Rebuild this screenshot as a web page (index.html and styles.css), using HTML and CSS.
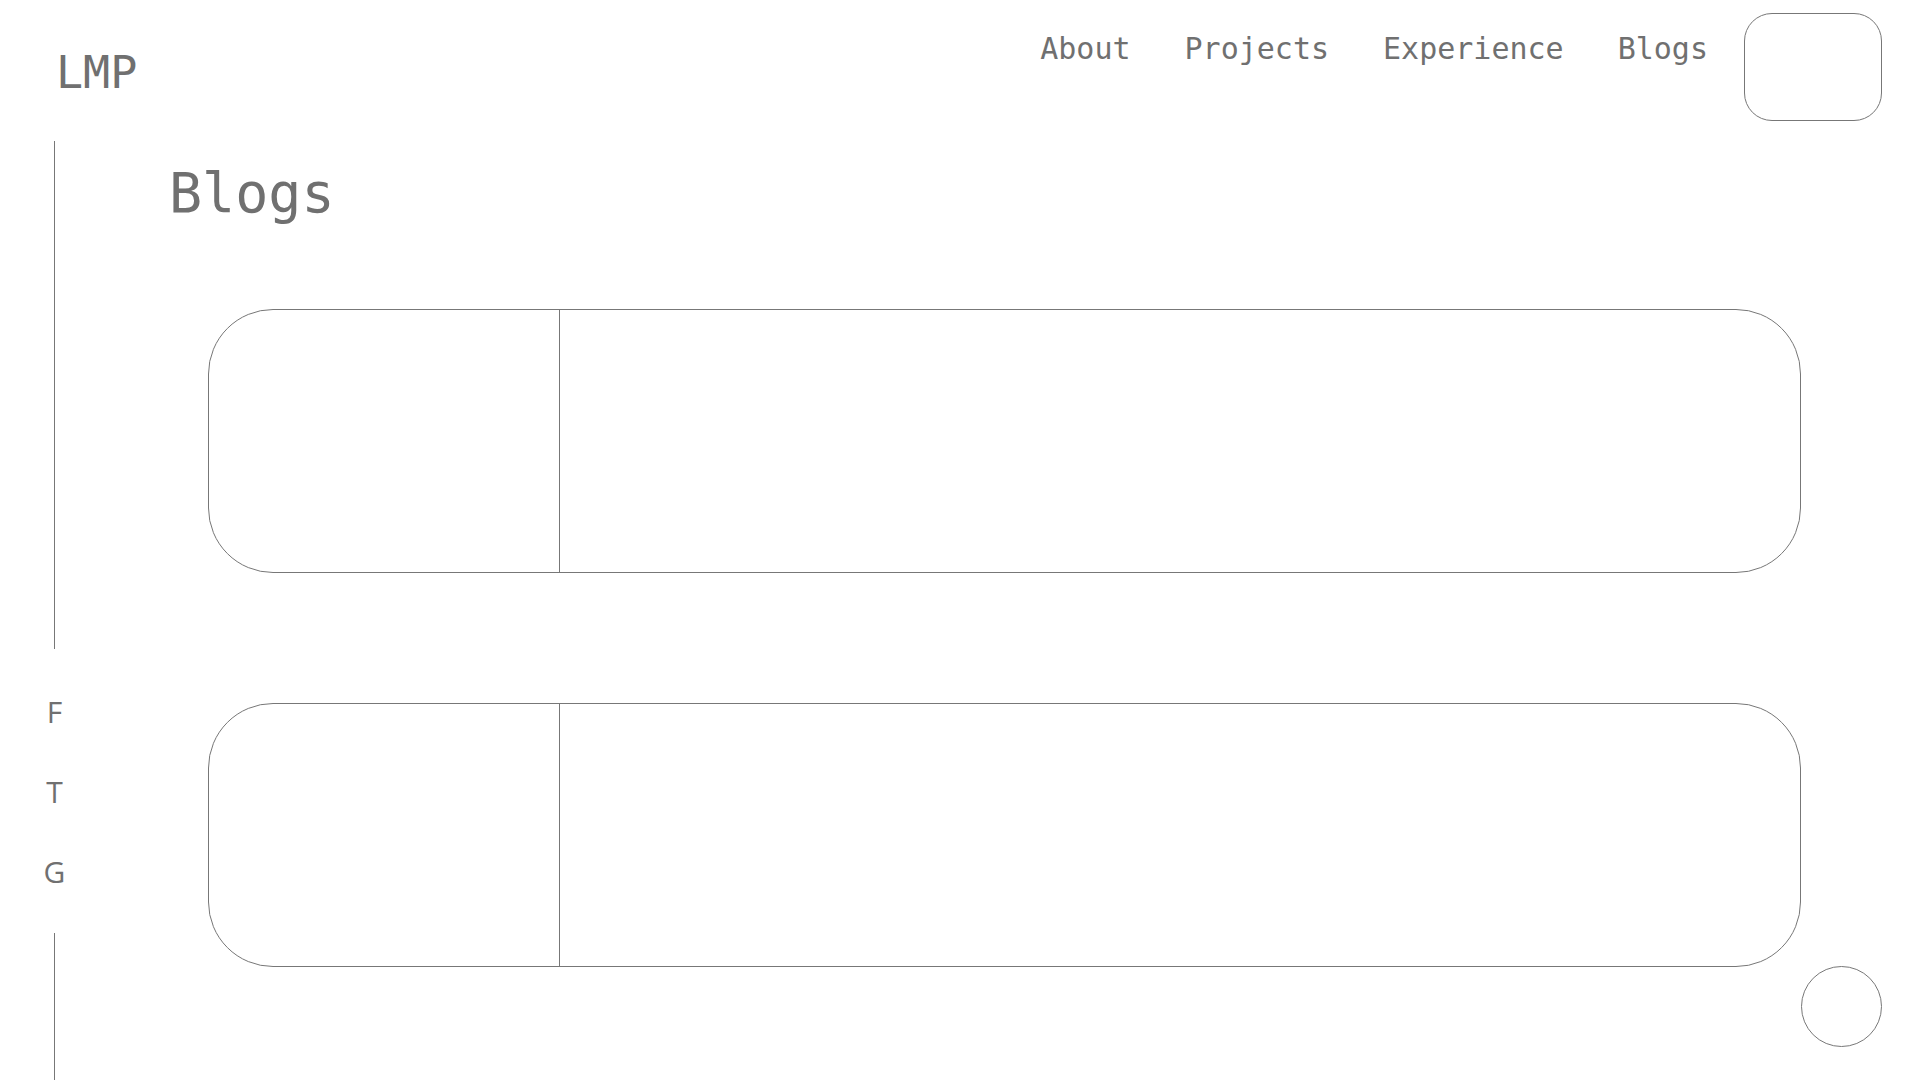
FILE: index.html
```html
<!DOCTYPE html>
<html lang="en">
<head>
<meta charset="utf-8">
<title>LMP - Blogs</title>
<link rel="stylesheet" href="styles.css">
</head>
<body>
<div class="page">
  <header class="header">
    <div class="logo">LMP</div>
    <nav class="nav">
      <a class="nav-link" href="#">About</a>
      <a class="nav-link" href="#">Projects</a>
      <a class="nav-link" href="#">Experience</a>
      <a class="nav-link" href="#">Blogs</a>
    </nav>
    <div class="menu-box"></div>
  </header>
  <div class="content">
    <aside class="sidebar">
      <div class="side-line side-line-top"></div>
      <div class="social">F</div>
      <div class="social">T</div>
      <div class="social">G</div>
      <div class="side-line side-line-bottom"></div>
    </aside>
    <main class="main">
      <h1 class="title">Blogs</h1>
      <div class="cards">
        <div class="card">
          <div class="card-thumb"></div>
          <div class="card-body"></div>
        </div>
        <div class="card">
          <div class="card-thumb"></div>
          <div class="card-body"></div>
        </div>
      </div>
    </main>
  </div>
  <div class="to-top"></div>
</div>
</body>
</html>
```

FILE: styles.css
```css
html, body {
  margin: 0;
  padding: 0;
  background: #ffffff;
}

body {
  font-family: "DejaVu Sans Mono", monospace;
  color: #707070;
  overflow: hidden;
}

.page {
  height: 1080px;
  display: flex;
  flex-direction: column;
}

.header {
  display: flex;
  align-items: flex-start;
  padding: 13px 38px 0 56px;
  height: 107px;
}

.logo {
  font-size: 45px;
  line-height: normal;
  margin-top: 33px;
}

.nav {
  margin-left: auto;
  margin-top: 18px;
  display: flex;
  gap: 54px;
}

.nav-link {
  font-size: 30px;
  line-height: normal;
  color: #707070;
  text-decoration: none;
}

.menu-box {
  width: 136px;
  height: 106px;
  border: 1px solid #777777;
  border-radius: 28px;
  margin-left: 36px;
}

.content {
  flex: 1;
  display: flex;
  min-height: 0;
}

.sidebar {
  width: 109px;
  flex: none;
  display: flex;
  flex-direction: column;
  align-items: center;
  padding-top: 21px;
}

.side-line {
  width: 1px;
  background: #777777;
}

.side-line-top {
  height: 508px;
  margin-bottom: 48px;
}

.side-line-bottom {
  flex: 1;
  margin-top: 46px;
}

.social {
  font-family: "Open Sans", "Noto Sans", sans-serif;
  font-size: 30px;
  line-height: 30px;
  height: 30px;
}

.social + .social {
  margin-top: 50px;
}

.main {
  flex: 1;
  padding: 41px 119px 0 0;
}

.title {
  margin: 0 0 0 60px;
  font-size: 55px;
  font-weight: normal;
  line-height: normal;
}

.cards {
  margin: 84px 0 0 99px;
  display: flex;
  flex-direction: column;
  gap: 130px;
}

.card {
  height: 262px;
  border: 1px solid #777777;
  border-radius: 65px;
  display: flex;
  overflow: hidden;
}

.card-thumb {
  width: 350px;
  border-right: 1px solid #777777;
  flex: none;
}

.card-body {
  flex: 1;
}

.to-top {
  position: fixed;
  right: 38px;
  bottom: 33px;
  width: 79px;
  height: 79px;
  border: 1px solid #777777;
  border-radius: 50%;
}
```
